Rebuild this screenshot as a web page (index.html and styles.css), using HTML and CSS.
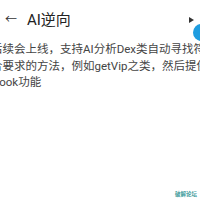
FILE: index.html
```html
<!DOCTYPE html>
<html>
<head>
<meta charset="utf-8">
<link rel="stylesheet" href="styles.css">
</head>
<body>
<div class="page">
  <div class="header">
    <span class="back">←</span>
    <span class="title">AI逆向</span>
    <span class="spacer"></span>
    <span class="play"></span>
  </div>
  <div class="fab"></div>
  <div class="text">
    <div class="line">后续会上线，支持AI分析Dex类自动寻找符</div>
    <div class="line">合要求的方法，例如getVip之类，然后提供</div>
    <div class="line">Hook功能</div>
  </div>
  <div class="watermark">破解论坛</div>
</div>
</body>
</html>
```
FILE: styles.css
```css
html, body {
  margin: 0;
  padding: 0;
  background: #ffffff;
  width: 200px;
  height: 200px;
  overflow: hidden;
  font-family: Roboto, "Noto Sans CJK SC", sans-serif;
}
.page {
  position: relative;
  width: 200px;
  height: 200px;
  overflow: hidden;
}
.header {
  display: flex;
  align-items: center;
  height: 20px;
  margin-top: 10px;
  padding-left: 5px;
}
.back {
  font-size: 12px;
  color: #333;
  width: 22px;
  line-height: 20px;
}
.title {
  font-size: 15px;
  color: #222;
  line-height: 20px;
}
.spacer { flex: 1; }
.play {
  width: 0;
  height: 0;
  border-left: 5px solid #333;
  border-top: 3.5px solid transparent;
  border-bottom: 3.5px solid transparent;
  margin-right: 6px;
  margin-top: -1px;
}
.fab {
  position: absolute;
  left: 193px;
  top: 24px;
  width: 17px;
  height: 17px;
  border-radius: 50%;
  background: #1e9de0;
}
.text {
  margin-left: -9px;
  margin-top: 11px;
  font-size: 11.5px;
  line-height: 16.5px;
  color: #444;
}
.line { white-space: nowrap; }
.watermark {
  position: absolute;
  left: 175px;
  top: 191px;
  font-size: 5.5px;
  line-height: 7px;
  color: #3a9a9a;
  font-weight: bold;
  white-space: nowrap;
}
```
